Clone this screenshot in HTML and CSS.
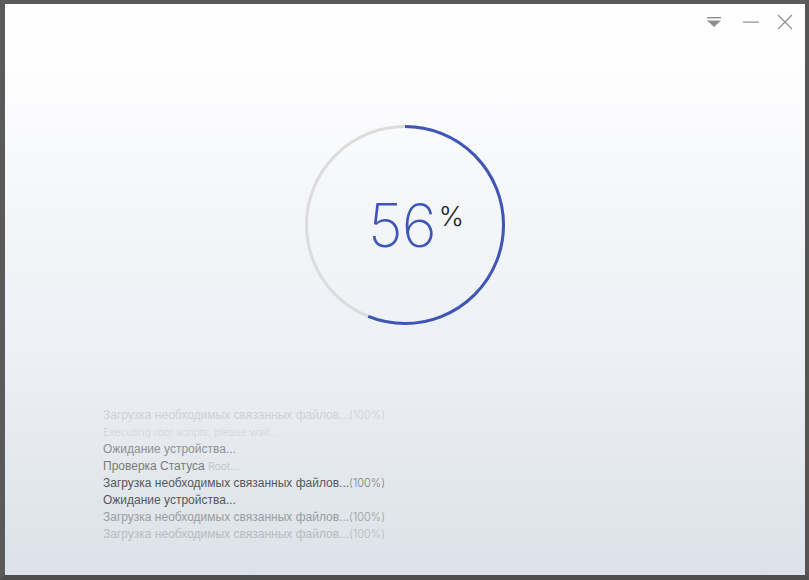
FILE: index.html
```html
<!DOCTYPE html>
<html lang="ru">
<head>
<meta charset="utf-8">
<title>Progress</title>
<link rel="stylesheet" href="styles.css">
</head>
<body>
<div class="window">
  <div class="titlebar">
    <button class="ctl ctl-menu" aria-label="menu">
      <svg width="16" height="12" viewBox="0 0 16 12"><rect x="1" y="0" width="14" height="1.4" fill="#8e8e8e"/><path d="M1 3.5 H15 L8 10 Z" fill="#8e8e8e"/></svg>
    </button>
    <button class="ctl ctl-min" aria-label="minimize">
      <svg width="18" height="12" viewBox="0 0 18 12"><rect x="1" y="5.5" width="16" height="1.2" fill="#8e8e8e"/></svg>
    </button>
    <button class="ctl ctl-close" aria-label="close">
      <svg width="16" height="16" viewBox="0 0 16 16"><path d="M1 1 L15 15 M15 1 L1 15" stroke="#8e8e8e" stroke-width="1.2"/></svg>
    </button>
  </div>

  <div class="progress">
    <div class="ring">
      <svg width="202" height="202" viewBox="0 0 202 202">
        <circle cx="101" cy="101" r="98.5" fill="none" stroke="#dcdcdc" stroke-width="3"/>
        <circle class="arc" cx="101" cy="101" r="98.5" fill="none" stroke="#3f56b9" stroke-width="3"
                stroke-dasharray="346.6 1000" transform="rotate(-90 101 101)"/>
      </svg>
      <div class="value"><span class="num">56</span><span class="pct">%</span></div>
    </div>
  </div>

  <div class="log">
    <div class="line l1">Загрузка необходимых связанных файлов...<span class="thin">(100%)</span></div>
    <div class="line l2"><span class="thin small">Executing root scripts, please wait...</span></div>
    <div class="line l3">Ожидание устройства...</div>
    <div class="line l4">Проверка Статуса <span class="thin small">Root...</span></div>
    <div class="line l5">Загрузка необходимых связанных файлов...<span class="thin">(100%)</span></div>
    <div class="line l6">Ожидание устройства...</div>
    <div class="line l7">Загрузка необходимых связанных файлов...<span class="thin">(100%)</span></div>
    <div class="line l8">Загрузка необходимых связанных файлов...<span class="thin">(100%)</span></div>
  </div>
</div>
</body>
</html>
```

FILE: styles.css
```css
* { box-sizing: border-box; }
html, body { margin: 0; padding: 0; }
body {
  width: 809px;
  height: 580px;
  background: #5a5a5a;
  font-family: "Liberation Sans", "DejaVu Sans", sans-serif;
  overflow: hidden;
}
.window {
  width: 809px;
  height: 580px;
  border-style: solid;
  border-color: #5c5c5c #555555 #4e4e4e #5a5a5a;
  border-width: 4px 4px 5px 5px;
  background: linear-gradient(to bottom, #ffffff 0px, #fdfdfe 80px, #f4f6f9 200px, #eef1f5 330px, #e6eaef 440px, #dce2e9 571px);
}
.titlebar {
  height: 36px;
  display: flex;
  justify-content: flex-end;
  align-items: center;
  gap: 0;
  padding-right: 12px;
}
.ctl {
  background: none;
  border: 0;
  padding: 0;
  margin: 0;
  display: flex;
  align-items: center;
  justify-content: center;
}
.ctl-menu { width: 16px; height: 12px; margin-right: 20px; margin-top: 2px; }
.ctl-min { width: 18px; height: 12px; margin-right: 17px; }
.ctl-close { width: 16px; height: 16px; }

.progress {
  display: flex;
  justify-content: center;
  padding-top: 84px;
}
.ring {
  position: relative;
  width: 202px;
  height: 202px;
}
.ring svg { display: block; }
.value {
  position: absolute;
  left: 0;
  top: 0;
  width: 202px;
  height: 202px;
  display: flex;
  justify-content: center;
  align-items: center;
  padding-left: 22px;
}
.num {
  font-family: "Inter", "Liberation Sans", sans-serif;
  font-weight: 200;
  font-size: 60px;
  color: #3f56b9;
  letter-spacing: -1px;
}
.pct {
  font-family: "Inter", "Liberation Sans", sans-serif;
  font-weight: 300;
  font-size: 27px;
  color: #222;
  align-self: flex-start;
  margin-top: 76px;
  margin-left: 3px;
}

.log {
  padding-top: 81px;
  padding-left: 98px;
  font-size: 12px;
}
.line {
  height: 17px;
  line-height: 17px;
  white-space: nowrap;
}
.thin {
  font-family: "Inter", "Liberation Sans", sans-serif;
  font-weight: 300;
  font-size: 11px;
}
.thin.small { font-size: 10.5px; }
.l1 { color: #cdd2d9; }
.l2 { color: #d2d6dd; }
.l3 { color: #8e9093; }
.l4 { color: #7a7c7f; }
.l4 .thin { color: #b9bcc1; }
.l5 { color: #55575a; }
.l5 .thin { color: #7c7e82; }
.l6 { color: #55575a; }
.l7 { color: #9a9ca0; }
.l8 { color: #b8bbc0; }
```
